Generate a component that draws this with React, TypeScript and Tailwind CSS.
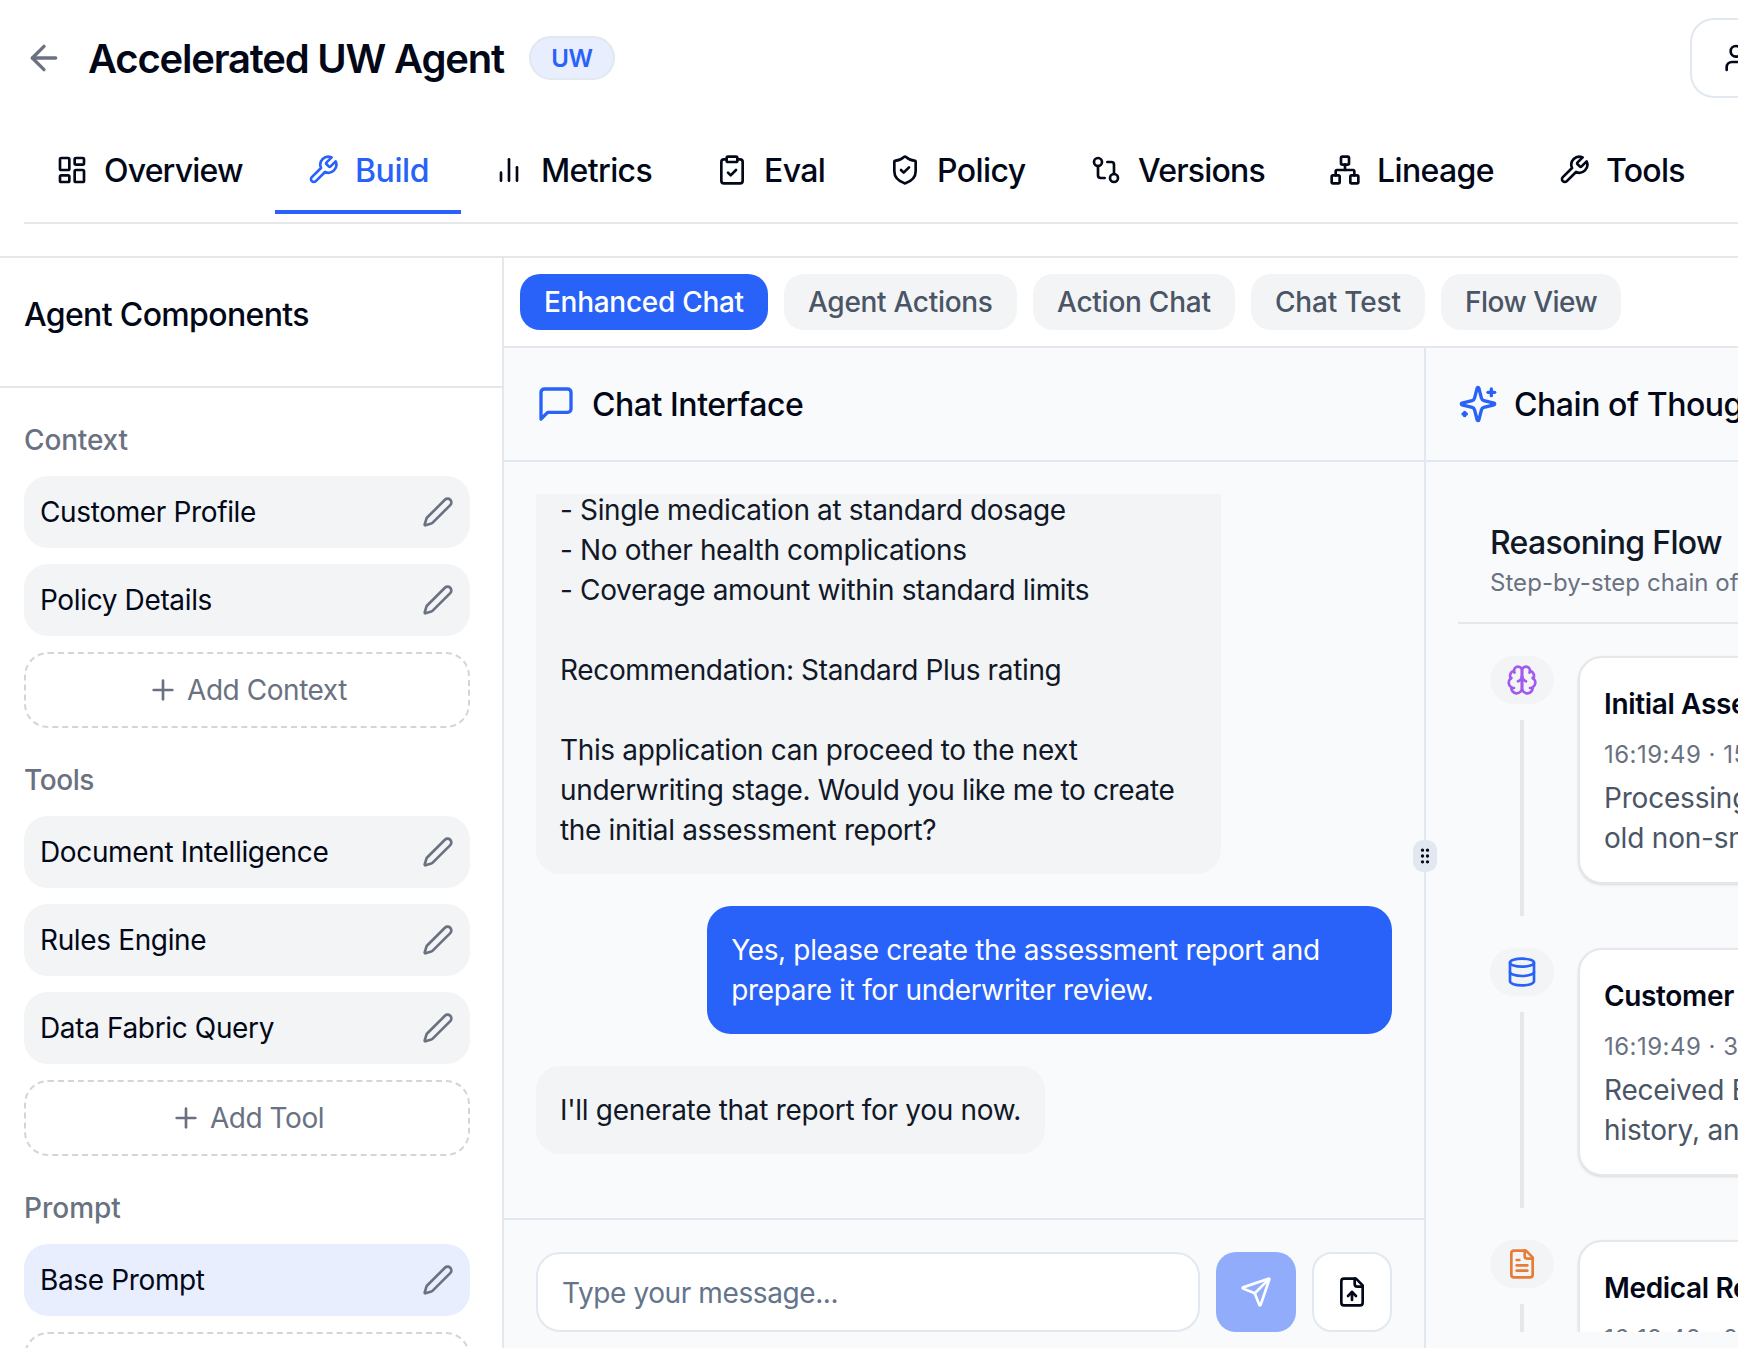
import React from "react";
import {
  ArrowLeft, LayoutDashboard, ClipboardCheck, ShieldCheck, GitCompare, Network, Users, Plus, Pen, GripVertical,
} from "lucide-react";

type IconProps = { className?: string };

function Svg({ className, children }: { className?: string; children: React.ReactNode }) {
  return (
    <svg className={className} viewBox="0 0 24 24" fill="none" stroke="currentColor" strokeWidth="2" strokeLinecap="round" strokeLinejoin="round">
      {children}
    </svg>
  );
}

const Bars = ({ className }: IconProps) => (
  <Svg className={className}><path d="M18 20V10" /><path d="M12 20V4" /><path d="M6 20v-6" /></Svg>
);
const WrenchIcon = ({ className }: IconProps) => (
  <Svg className={className}><path d="M14.7 6.3a1 1 0 0 0 0 1.4l1.6 1.6a1 1 0 0 0 1.4 0l3.77-3.77a6 6 0 0 1-7.94 7.94l-6.91 6.91a2.12 2.12 0 0 1-3-3l6.91-6.91a6 6 0 0 1 7.94-7.94l-3.76 3.76z" /></Svg>
);
const Message = ({ className }: IconProps) => (
  <Svg className={className}><path d="M21 15a2 2 0 0 1-2 2H7l-4 4V5a2 2 0 0 1 2-2h14a2 2 0 0 1 2 2z" /></Svg>
);
const SparklesIcon = ({ className }: IconProps) => (
  <Svg className={className}>
    <path d="M9.937 15.5A2 2 0 0 0 8.5 14.063l-6.135-1.582a.5.5 0 0 1 0-.962L8.5 9.936A2 2 0 0 0 9.937 8.5l1.582-6.135a.5.5 0 0 1 .963 0L14.063 8.5A2 2 0 0 0 15.5 9.937l6.135 1.581a.5.5 0 0 1 0 .964L15.5 14.063a2 2 0 0 0-1.437 1.437l-1.582 6.135a.5.5 0 0 1-.963 0z" />
    <path d="M20 3v4" /><path d="M22 5h-4" /><path d="M4 17v2" /><path d="M5 18H3" />
  </Svg>
);
const BrainIcon = ({ className }: IconProps) => (
  <Svg className={className}>
    <path d="M12 5a3 3 0 1 0-5.997.125 4 4 0 0 0-2.526 5.77 4 4 0 0 0 .556 6.588A4 4 0 1 0 12 18Z" />
    <path d="M12 5a3 3 0 1 1 5.997.125 4 4 0 0 1 2.526 5.77 4 4 0 0 1-.556 6.588A4 4 0 1 1 12 18Z" />
    <path d="M15 13a4.5 4.5 0 0 1-3-4 4.5 4.5 0 0 1-3 4" />
    <path d="M17.599 6.5a3 3 0 0 0 .399-1.375" /><path d="M6.003 5.125A3 3 0 0 0 6.401 6.5" />
    <path d="M3.477 10.896a4 4 0 0 1 .585-.396" /><path d="M19.938 10.5a4 4 0 0 1 .585.396" />
    <path d="M6 18a4 4 0 0 1-1.967-.516" /><path d="M19.967 17.484A4 4 0 0 1 18 18" />
  </Svg>
);
const DatabaseIcon = ({ className }: IconProps) => (
  <Svg className={className}><ellipse cx="12" cy="5" rx="9" ry="3" /><path d="M3 5V19A9 3 0 0 0 21 19V5" /><path d="M3 12A9 3 0 0 0 21 12" /></Svg>
);
const FileTextIcon = ({ className }: IconProps) => (
  <Svg className={className}>
    <path d="M15 2H6a2 2 0 0 0-2 2v16a2 2 0 0 0 2 2h12a2 2 0 0 0 2-2V7Z" /><path d="M14 2v4a2 2 0 0 0 2 2h4" />
    <path d="M10 9H8" /><path d="M16 13H8" /><path d="M16 17H8" />
  </Svg>
);
const FileUpIcon = ({ className }: IconProps) => (
  <Svg className={className}>
    <path d="M15 2H6a2 2 0 0 0-2 2v16a2 2 0 0 0 2 2h12a2 2 0 0 0 2-2V7Z" /><path d="M14 2v4a2 2 0 0 0 2 2h4" />
    <path d="M12 12v6" /><path d="m15 15-3-3-3 3" />
  </Svg>
);
const SendIcon = ({ className }: IconProps) => (
  <Svg className={className}>
    <path d="M14.536 21.686a.5.5 0 0 0 .937-.024l6.5-19a.496.496 0 0 0-.635-.635l-19 6.5a.5.5 0 0 0-.024.937l7.93 3.18a2 2 0 0 1 1.112 1.11z" />
    <path d="m21.854 2.147-10.94 10.939" />
  </Svg>
);

const tabs: { label: string; icon: React.ComponentType<IconProps>; width: string; active?: boolean }[] = [
  { label: "Overview", icon: LayoutDashboard, width: "w-[251px] tracking-[-0.83px]" },
  { label: "Build", icon: WrenchIcon, width: "w-[186px] tracking-[-0.44px]", active: true },
  { label: "Metrics", icon: Bars, width: "w-[223px] tracking-[-0.63px]" },
  { label: "Eval", icon: ClipboardCheck, width: "w-[173px] tracking-[-0.6px]" },
  { label: "Policy", icon: ShieldCheck, width: "w-[201px] tracking-[-0.6px]" },
  { label: "Versions", icon: GitCompare, width: "w-[239px] tracking-[-0.8px]" },
  { label: "Lineage", icon: Network, width: "w-[229px] tracking-[-0.63px]" },
  { label: "Tools", icon: WrenchIcon, width: "w-[190px] tracking-[-0.7px]" },
];

const sections = [
  { title: "Context", tracking: "tracking-[-0.16px]", items: ["Customer Profile", "Policy Details"], add: "Add Context" },
  { title: "Tools", tracking: "tracking-[-0.4px]", items: ["Document Intelligence", "Rules Engine", "Data Fabric Query"], add: "Add Tool" },
  { title: "Prompt", tracking: "tracking-normal", items: ["Base Prompt"], add: "Add Prompt" },
];

const views = [
  { label: "Enhanced Chat", style: "w-[248px] tracking-[-0.28px] bg-[#2962f8] text-white" },
  { label: "Agent Actions", style: "w-[233px] tracking-[-0.3px] bg-gray-100 text-gray-600" },
  { label: "Action Chat", style: "w-[202px] tracking-[-0.25px] bg-gray-100 text-gray-600" },
  { label: "Chat Test", style: "w-[174px] tracking-[-0.18px] bg-gray-100 text-gray-600" },
  { label: "Flow View", style: "w-[180px] tracking-[-0.5px] bg-gray-100 text-gray-600" },
];

const steps = [
  { title: "Initial Assessment", meta: "16:19:49 · 150ms", lines: ["Processing application for 35-year-", "old non-smoker"], icon: BrainIcon, color: "text-[#a259f0]" },
  { title: "Customer Profile", meta: "16:19:49 · 320ms", lines: ["Received EHR data, medical", "history, and lab results"], icon: DatabaseIcon, color: "text-[#2962f8]" },
  { title: "Medical Records", meta: "16:19:49 · 280ms", lines: ["Analyzing medical records", "for risk factors"], icon: FileTextIcon, color: "text-[#e87b35]" },
];

export default function App() {
  return (
    <div className="flex h-[1348px] w-[1738px] flex-col overflow-hidden bg-white font-['Inter',sans-serif] text-[28px] leading-[40px] text-[#020817]">
      <header className="h-[258px] shrink-0 border-b-2 border-gray-200 pl-6">
        <div className="flex h-[116px] items-center">
          <ArrowLeft className="size-10 shrink-0 text-gray-500" />
          <h1 className="ml-6 w-[417px] shrink-0 translate-y-px whitespace-nowrap text-[40px] font-semibold leading-[56px] tracking-[-1.2px]">Accelerated UW Agent</h1>
          <span className="ml-6 flex h-11 w-[86px] shrink-0 items-center justify-center rounded-full border-2 border-[#e2e8f0] bg-[#e8eefe] pt-0.5 text-[24px] font-semibold leading-8 tracking-[-0.4px] text-[#2962f8]">UW</span>
          <button className="ml-auto flex h-20 w-[48px] shrink-0 items-center overflow-hidden rounded-l-3xl border-2 border-r-0 border-[#e2e8f0] pl-8">
            <Users className="size-8 shrink-0" />
          </button>
        </div>
        <nav className="flex h-[108px] items-start border-b-2 border-gray-200 pt-[10px]">
          {tabs.map(({ label, icon: Icon, width, active }) => (
            <div
              key={label}
              className={`flex h-[88px] shrink-0 items-center gap-4 border-b-4 px-8 pb-[1px] pt-[5px] text-[32px] font-medium leading-[48px] ${width} ${active ? "border-[#2962f8] text-[#2962f8]" : "border-transparent"}`}
            >
              <Icon className="size-8 shrink-0" />
              <span className="translate-y-px">{label}</span>
            </div>
          ))}
        </nav>
      </header>

      <div className="flex min-h-0 flex-1">
        <aside className="w-[504px] shrink-0 overflow-hidden border-r-2 border-gray-200">
          <div className="h-[130px] border-b-2 border-gray-200 px-6 pt-[33px]">
            <h2 className="text-[32px] font-medium leading-[48px] tracking-[-0.65px]">Agent Components</h2>
          </div>
          <div className="flex flex-col gap-8 py-8 pl-6 pr-8 tracking-[-0.36px]">
            {sections.map((s) => (
              <section key={s.title} className="flex flex-col gap-4">
                <h3 className={`font-medium text-gray-500 ${s.tracking}`}>{s.title}</h3>
                {s.items.map((item) => (
                  <div key={item} className={`flex h-[72px] items-center justify-between rounded-3xl px-4 ${item === "Base Prompt" ? "bg-[#e8eefe]" : "bg-gray-100"}`}>
                    <span>{item}</span>
                    <Pen className="size-8 text-gray-500" />
                  </div>
                ))}
                <button className="flex h-[76px] items-center justify-center gap-2 rounded-3xl border-2 border-dashed border-gray-300 tracking-[-0.45px] text-gray-500">
                  <Plus className="size-8" />
                  {s.add}
                </button>
              </section>
            ))}
          </div>
        </aside>

        <main className="flex min-w-0 flex-1 flex-col">
          <div className="flex h-[90px] shrink-0 items-center gap-4 border-b-2 border-gray-200 px-4">
            {views.map((v) => (
              <button key={v.label} className={`h-14 shrink-0 whitespace-nowrap rounded-[20px] pl-6 text-left font-medium ${v.style}`}>
                {v.label}
              </button>
            ))}
          </div>

          <div className="relative flex min-h-0 flex-1 bg-[#f9fafc]">
            <section className="flex w-[920px] shrink-0 flex-col">
              <div className="flex h-[114px] shrink-0 items-center gap-4 border-b-2 border-[#e2e8f0] px-8">
                <Message className="size-10 text-[#2962f8]" />
                <h2 className="translate-y-px text-[32px] font-medium leading-[48px] tracking-[-0.45px]">Chat Interface</h2>
              </div>
              <div className="h-[756px] shrink-0 p-8">
                <div className="flex h-full flex-col justify-end gap-8 overflow-hidden pb-8 tracking-[-0.35px] text-[#111827]">
                  <div className="w-4/5 shrink-0 whitespace-pre-line rounded-3xl bg-gray-100 p-6">
                    {"- Single medication at standard dosage\n- No other health complications\n- Coverage amount within standard limits\n\nRecommendation: Standard Plus rating\n\nThis application can proceed to the next underwriting stage. Would you like me to create the initial assessment report?"}
                  </div>
                  <div className="w-4/5 shrink-0 self-end rounded-3xl bg-[#2962f8] p-6 text-white">
                    Yes, please create the assessment report and prepare it for underwriter review.
                  </div>
                  <div className="w-[509px] shrink-0 self-start whitespace-nowrap rounded-3xl bg-gray-100 p-6 tracking-[-0.31px]">I'll generate that report for you now.</div>
                </div>
              </div>
              <div className="flex flex-1 gap-4 border-t-2 border-[#e2e8f0] px-8 pt-8">
                <div className="flex h-20 flex-1 items-center rounded-3xl border-2 border-[#e2e8f0] bg-white px-6 pt-0.5 tracking-[-0.4px] text-[#64748b]">Type your message...</div>
                <button className="flex size-20 items-center justify-center rounded-[20px] bg-[#91acfb] text-white"><SendIcon className="size-8" /></button>
                <button className="flex size-20 items-center justify-center rounded-[20px] border-2 border-[#e2e8f0] bg-white"><FileUpIcon className="size-8" /></button>
              </div>
            </section>

            <div className="w-0.5 shrink-0 bg-[#e2e8f0]" />
            <div className="absolute left-[909px] top-[492px] flex h-8 w-6 items-center justify-center rounded-[10px] bg-[#e2e8f0]">
              <GripVertical className="size-5" />
            </div>

            <section className="flex min-w-0 flex-1 flex-col overflow-hidden">
              <div className="flex h-[114px] shrink-0 items-center gap-4 border-b-2 border-[#e2e8f0] pl-8">
                <SparklesIcon className="size-10 shrink-0 text-[#2962f8]" />
                <h2 className="translate-y-px whitespace-nowrap text-[32px] font-medium leading-[48px] tracking-[-0.45px]">Chain of Thought</h2>
              </div>
              <div className="ml-8 mt-8 h-[838px] shrink-0 overflow-hidden">
                <div className="h-[130px] whitespace-nowrap border-b-2 border-gray-200 pl-8 pt-[25px]">
                  <h3 className="text-[32px] font-medium leading-[48px] tracking-[-0.68px] text-[#111827]">Reasoning Flow</h3>
                  <p className="text-[24px] leading-8 tracking-[0.05px] text-gray-500">Step-by-step chain of thought</p>
                </div>
                <div className="flex flex-col pl-8 pt-8">
                  {steps.map((s) => (
                    <div key={s.title} className="flex h-[292px] shrink-0 gap-6">
                      <div className="flex w-16 shrink-0 flex-col items-center">
                        <div className={`flex h-12 w-16 items-center justify-center rounded-full bg-gray-100 ${s.color}`}>
                          <s.icon className="size-8" />
                        </div>
                        <div className="mt-4 h-[196px] w-1 bg-gray-200" />
                      </div>
                      <div className="h-[228px] w-[500px] shrink-0 whitespace-nowrap rounded-3xl border-2 border-gray-200 bg-white p-6 shadow-sm">
                        <h4 className="font-semibold leading-[44px] tracking-[-0.35px]">{s.title}</h4>
                        <p className="mt-[13px] text-[24px] leading-8 tracking-[0.48px] text-gray-500">{s.meta}</p>
                        <div className="mt-[7px] tracking-[-0.2px] text-gray-600">{s.lines.map((l) => <p key={l}>{l}</p>)}</div>
                      </div>
                    </div>
                  ))}
                </div>
              </div>
            </section>
          </div>
        </main>
      </div>
    </div>
  );
}
